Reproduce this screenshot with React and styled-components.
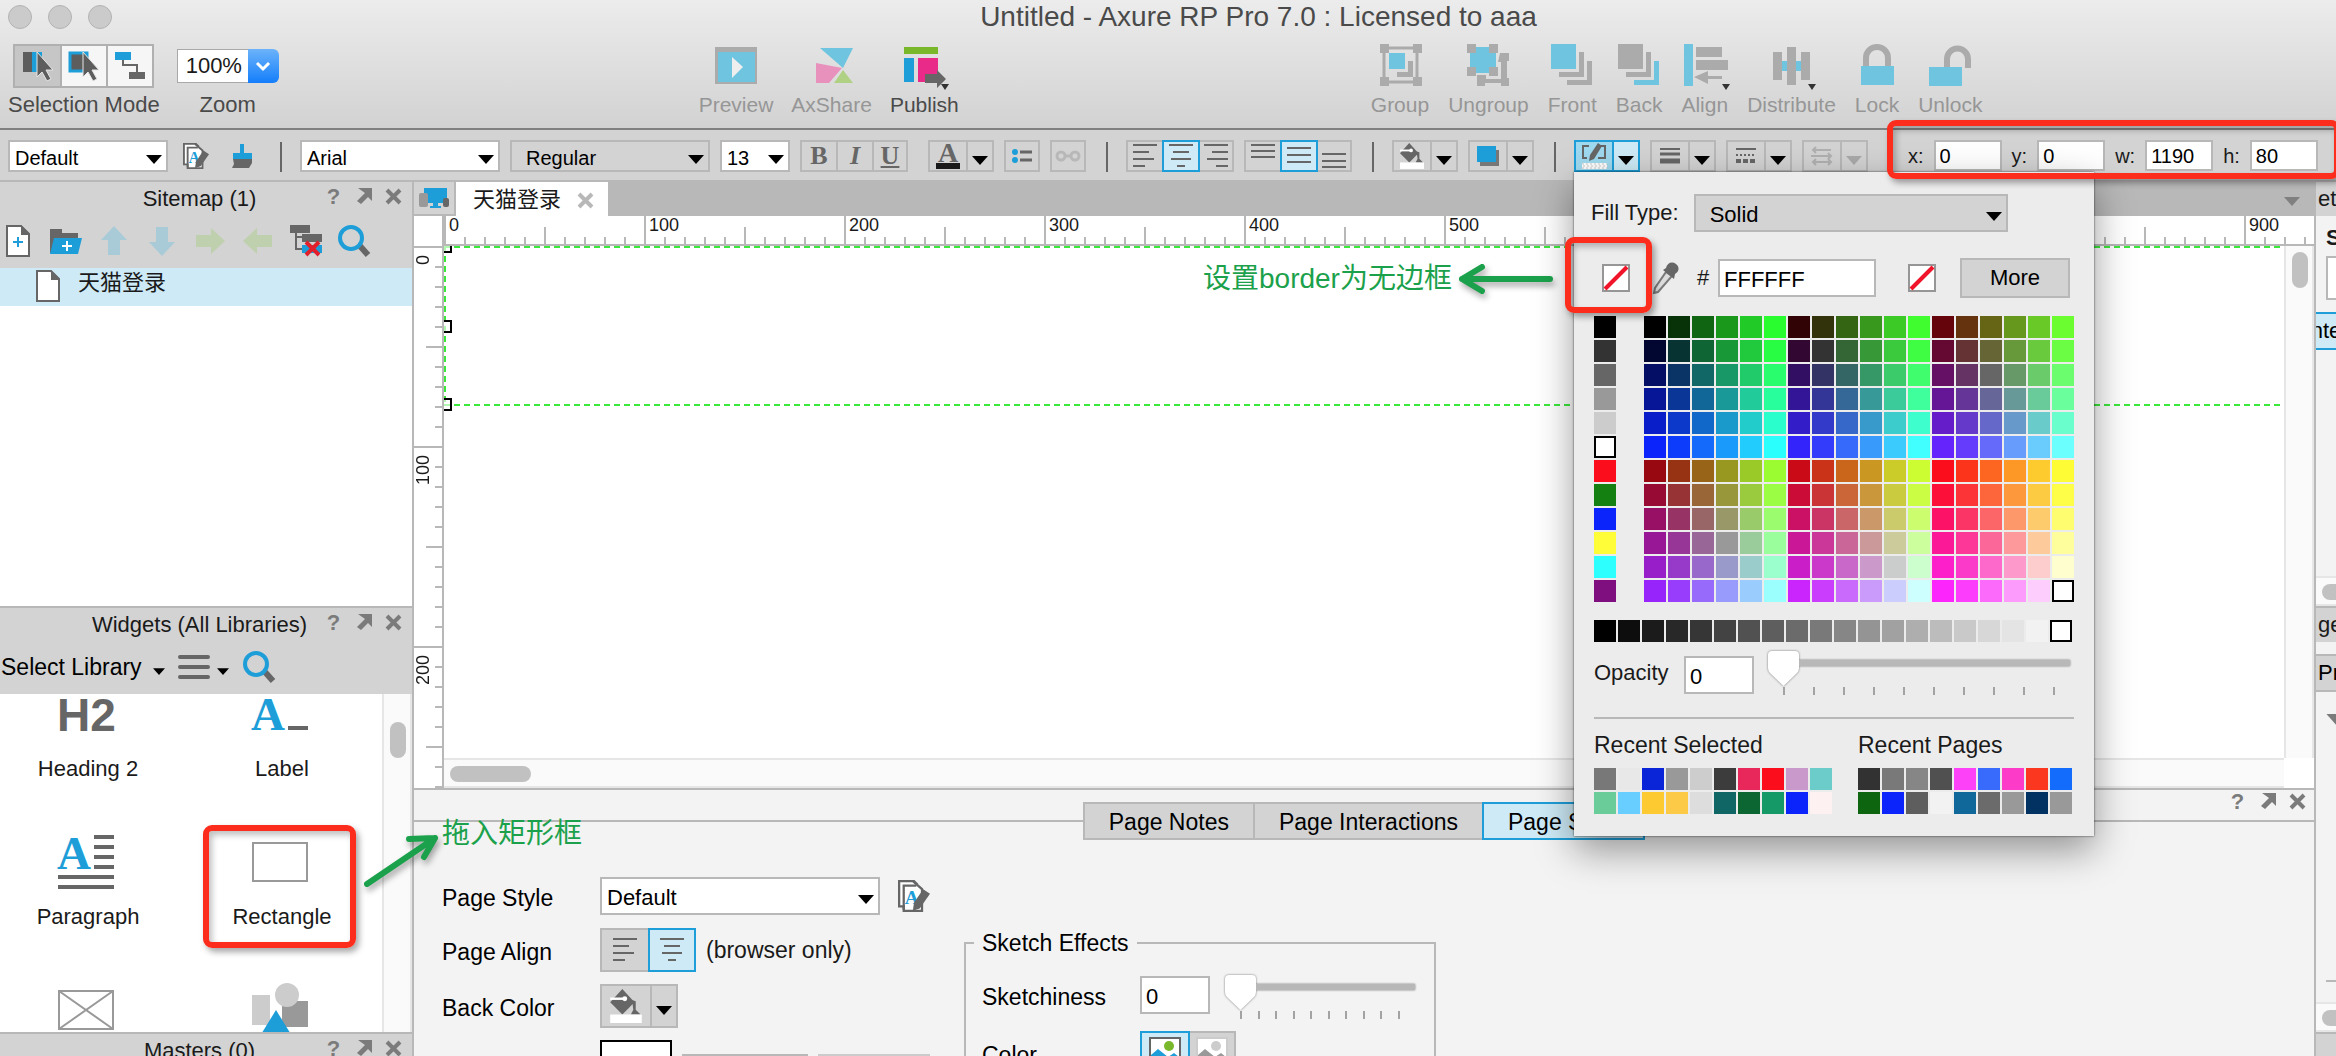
import React, { useState } from 'react';
import styled, { createGlobalStyle, css } from 'styled-components';

const SANS = '"Liberation Sans", "Noto Sans CJK SC", Arial, sans-serif';
const SERIF = '"Liberation Serif", "Noto Sans CJK SC", serif';
const LINE = '#b8b8b8';
const BAR = '#d3d3d3';
const INK = '#666666';
const BLUE = '#1d9ed8';
const PALE = '#cdeaf6';
const RED = '#fc2d1c';
const GREEN = '#1ba14b';

const GlobalStyle = createGlobalStyle`
  *, *::before, *::after { box-sizing: border-box; }
  body { margin: 0; font-family: ${SANS}; font-size: 22px; line-height: 24px; color: #1a1a1a; }
  button, input, select { font: inherit; color: inherit; margin: 0; padding: 0; border-radius: 0; }
  button { border: 0; background: none; cursor: pointer; }
  svg { display: block; overflow: visible; }
`;

/* ---------- frame ---------- */

const Window = styled.div`
  height: 100vh;
  overflow: hidden;
  display: flex;
  flex-direction: column;
  background: #f3f3f3;
`;

const Chrome = styled.header`
  height: 130px;
  flex: none;
  border-bottom: 2px solid #808080;
  background: linear-gradient(#ececec, #d2d2d2);
`;

const TitleRow = styled.div`
  display: flex;
  align-items: center;
  height: 34px;
`;

const Lights = styled.div`
  display: flex;
  gap: 16px;
  width: 181px;
  padding-left: 8px;
`;

const Light = styled.button`
  width: 24px;
  height: 24px;
  border: 1px solid #b3b3b3;
  border-radius: 50%;
  background: #cbcbcb;
`;

const Title = styled.h1`
  flex: 1;
  margin: 0;
  font-size: 28px;
  font-weight: 400;
  text-align: center;
  white-space: nowrap;
  color: #4a4a4a;
`;

const ToolRow = styled.div`
  display: flex;
  padding: 10px 0 0 8px;
`;

const ToolGroup = styled.div`
  display: flex;
  gap: ${(p) => p.$gap || 19}px;
  margin-left: ${(p) => p.$lead || 0}px;
`;

const Tool = styled.div`
  display: flex;
  flex-direction: column;
  align-items: center;
  gap: 5px;
  font-size: 22px;
  white-space: nowrap;
  color: ${(p) => (p.$dim ? '#969696' : '#4a4a4a')};
`;

const ToolButton = styled(Tool).attrs({ as: 'button', type: 'button' })`
  font-size: 21px;
`;

const IconSlot = styled.span`
  display: flex;
  align-items: center;
  justify-content: center;
  height: 44px;
`;

const Modes = styled.span`
  display: flex;
  border: 2px solid #b0b0b0;
`;

const Mode = styled.button`
  display: grid;
  place-items: center;
  width: 45px;
  height: 40px;
  background: ${(p) => (p.$on ? '#c6c6c6' : '#f6f6f6')};
  & + & { width: 46px; border-left: 2px solid #b0b0b0; }
`;

const ZoomInput = styled.input`
  width: 71px;
  height: 34px;
  padding-left: 8px;
  border: 1px solid #a9a9a9;
  border-right: 0;
  background: #fff;
  color: #1a1a1a;
`;

const ZoomDrop = styled.button`
  display: grid;
  place-items: center;
  width: 31px;
  height: 34px;
  border-radius: 0 6px 6px 0;
  background: linear-gradient(#6cb3fa, #147efb);
`;

/* ---------- format bar ---------- */

const FormatBar = styled.div`
  position: relative;
  z-index: 5;
  display: flex;
  align-items: flex-start;
  gap: 10px;
  flex: none;
  height: 52px;
  padding: 10px 0 0 8px;
  border-bottom: 2px solid ${LINE};
  background: ${BAR};
  font-size: 20px;
`;

const Rule = styled.span`
  width: 2px;
  height: 30px;
  margin: 2px 8px 0 10px;
  background: ${INK};
`;

const SelectBox = styled.span`
  display: grid;
  align-items: center;
  width: ${(p) => p.$w}px;
  height: ${(p) => p.$h || 32}px;
  border: 2px solid ${LINE};
  background: ${(p) => (p.$grey ? BAR : '#fff')};
  color: #000;
  & > * { grid-area: 1 / 1; }
  & > svg { justify-self: end; margin: 6px 4px 0 0; pointer-events: none; }
  select {
    appearance: none;
    width: 100%;
    height: 100%;
    padding: 4px 24px 0 ${(p) => p.$pad || 5}px;
    border: 0;
    background: none;
  }
`;

const Segments = styled.span`
  position: relative;
  display: flex;
  margin-left: ${(p) => p.$lead || 0}px;
  & > button + button { margin-left: -2px; }
`;

const Segment = styled.button`
  display: grid;
  place-items: center;
  position: relative;
  z-index: ${(p) => (p.$on ? 1 : 0)};
  width: ${(p) => p.$w || 36}px;
  height: ${(p) => p.$h || 32}px;
  border: 2px solid ${(p) => (p.$on ? BLUE : LINE)};
  background: ${(p) => (p.$on ? (p.$deep ? '#9fd9ef' : PALE) : BAR)};
`;

const PlainButton = styled.button`
  display: grid;
  place-items: center;
  width: 36px;
  height: 32px;
`;

const Glyph = styled.span`
  font: ${(p) => (p.$italic ? 'italic 700' : '700')} 26px/28px ${SERIF};
  color: ${INK};
  text-decoration: ${(p) => (p.$under ? 'underline' : 'none')};
`;

const Coords = styled.span`
  position: relative;
  display: flex;
  align-items: flex-start;
  gap: 10px;
  margin-left: 30px;
  label { display: flex; gap: 10px; line-height: 32px; }
  input {
    width: 68px;
    height: 31px;
    padding-left: 4px;
    border: 2px solid ${LINE};
    background: #fff;
    color: #000;
  }
`;

const RedFrame = styled.span`
  position: absolute;
  z-index: 4;
  left: ${(p) => p.$x}px;
  top: ${(p) => p.$y}px;
  width: ${(p) => p.$w}px;
  height: ${(p) => p.$h}px;
  border: 6px solid ${RED};
  border-radius: 9px;
  box-shadow: 3px 4px 6px rgba(0, 0, 0, 0.35), inset 3px 4px 6px rgba(0, 0, 0, 0.25);
  pointer-events: none;
`;

/* ---------- colour popup ---------- */

const Popup = styled.div`
  position: absolute;
  z-index: 3;
  top: 100%;
  left: 0;
  width: 520px;
  padding: 22px 20px;
  background: #ececec;
  box-shadow: 0 0 2px rgba(0, 0, 0, 0.7), 0 14px 36px rgba(0, 0, 0, 0.4);
  font-size: 22px;
  color: #1a1a1a;
`;

const FillRow = styled.label`
  display: flex;
  gap: 15px;
  align-items: center;
  height: 38px;
  margin-left: -3px;
`;

const HexRow = styled.div`
  display: grid;
  grid-template-columns: 45px 50px 21px 158px 1fr 110px;
  align-items: center;
  justify-items: start;
  height: 40px;
  margin: 26px 4px 18px 8px;
`;

const NoFill = styled.button`
  width: 28px;
  height: 28px;
  border: 2px solid #969696;
  background: #fff;
`;

const TextField = styled.input`
  width: ${(p) => p.$w}px;
  height: 38px;
  padding: 4px 0 0 4px;
  border: 2px solid ${LINE};
  background: #fff;
  && { color: #000; }
`;

const MoreButton = styled.button`
  width: 110px;
  height: 40px;
  border: 2px solid ${LINE};
  background: ${BAR};
  && { color: #000; }
`;

const Palettes = styled.div`
  display: flex;
  justify-content: space-between;
`;

const Swatches = styled.div`
  display: grid;
  grid-template-columns: repeat(${(p) => p.$cols}, 22px);
  gap: 2px;
  width: max-content;
`;

const Swatch = styled.button`
  width: 22px;
  height: 22px;
  background: ${(p) => p.$c};
  ${(p) => p.$picked && css`border: 2px solid #000;`}
`;

const GreyRow = styled.div`
  margin: 18px 0 9px;
`;

const OpacityRow = styled.div`
  display: flex;
  align-items: flex-start;
  height: 43px;
  label { width: 90px; padding-top: 10px; }
  > input { margin-top: 5px; }
`;

const Recents = styled.div`
  display: grid;
  grid-template-columns: 264px 1fr;
  margin-top: 23px;
  padding-top: 14px;
  border-top: 2px solid ${LINE};
`;

const RecentTitle = styled.h3`
  margin: 0 0 11px;
  font-size: 23px;
  font-weight: 400;
`;

/* ---------- slider ---------- */

const SliderBox = styled.span`
  display: block;
  width: ${(p) => p.$w}px;
  margin-left: ${(p) => p.$lead}px;
`;

const Range = styled.input.attrs({ type: 'range' })`
  appearance: none;
  display: block;
  width: 100%;
  height: 36px;
  background: linear-gradient(${LINE}, ${LINE}) 16px 9px / 100% 6px no-repeat;
  border-radius: 3px;
  filter: drop-shadow(0 0 1px rgba(0, 0, 0, 0.5));
  &::-webkit-slider-runnable-track { height: 36px; }
  &::-webkit-slider-thumb {
    appearance: none;
    width: 31px;
    height: 35px;
    background: #fff;
    clip-path: path('M4 0H27Q31 0 31 4V17Q31 20 29 22L15.500 35L2 22Q0 20 0 17V4Q0 0 4 0Z');
  }
`;

const Ticks = styled.span`
  display: flex;
  justify-content: space-between;
  padding: 0 15px;
  i { width: 2px; height: 8px; background: #a3a3a3; }
`;

/* ---------- workspace ---------- */

const Workspace = styled.main`
  flex: 1;
  min-height: 0;
  display: grid;
  grid-template-columns: 414px minmax(0, 1fr) 22px;
`;

const Column = styled.section`
  display: flex;
  flex-direction: column;
  min-width: 0;
  min-height: 0;
`;

const Side = styled(Column)`
  border-right: 2px solid ${LINE};
  background: #fff;
`;

const PanelHead = styled.div`
  display: flex;
  align-items: center;
  flex: none;
  height: ${(p) => (p.$line ? 34 : 32)}px;
  ${(p) => p.$line && css`border-top: 2px solid ${LINE};`}
  padding-left: 76px;
  background: ${BAR};
  h2 { flex: 1; margin: 0; padding-top: 2px; font-size: 22px; font-weight: 400; line-height: 32px; text-align: center; white-space: nowrap; }
`;

const HeadActions = styled.div`
  display: flex;
  gap: 9px;
  padding: 0 ${(p) => p.$end || 8}px 4px 0;
  button { display: grid; place-items: center; width: 21px; height: 22px; color: #7b7b7b; font-size: 22px; font-weight: 700; }
`;

const IconBar = styled.div`
  display: flex;
  align-items: center;
  gap: 12px;
  flex: none;
  height: 54px;
  background: ${BAR};
`;

const Tree = styled.ul`
  flex: 1;
  margin: 0;
  padding: 0;
  list-style: none;
`;

const TreeItem = styled.li`
  display: flex;
  gap: 18px;
  height: 38px;
  padding: 2px 0 0 36px;
  background: ${PALE};
  line-height: 26px;
`;

const WidgetsPanel = styled.div`
  display: flex;
  flex-direction: column;
  flex: none;
  height: 426px;
`;

const LibraryButton = styled.button`
  display: flex;
  align-items: center;
  gap: ${(p) => p.$gap}px;
  padding-left: 1px;
  && { color: #000; font-size: 23px; }
  svg:last-child { margin-top: 8px; }
`;

const WidgetArea = styled.div`
  position: relative;
  display: flex;
  flex: 1;
  min-height: 0;
`;

const WidgetClip = styled.div`
  flex: 1;
  overflow: hidden;
`;

const WidgetGrid = styled.div`
  display: grid;
  grid-template-columns: 172px 216px;
  grid-auto-rows: 148px;
`;

const Widget = styled.button`
  display: flex;
  flex-direction: column;
  align-items: center;
  justify-content: flex-start;
  svg { margin-bottom: 23px; }
  span { padding-left: 4px; }
`;

const ScrollY = styled.div`
  width: 30px;
  padding: ${(p) => p.$top}px 6px 0;
  border: solid #e6e6e6;
  border-width: 0 2px;
  background: #fafafa;
  &::before { content: ''; display: block; width: 16px; height: 36px; border-radius: 8px; background: #c1c1c1; }
`;

const ScrollX = styled.div`
  flex: none;
  height: 30px;
  padding: 6px 0 0 6px;
  border: solid #e6e6e6;
  border-width: 2px 0;
  background: #fafafa;
  overflow: hidden;
  &::before { content: ''; display: block; width: 81px; height: 16px; border-radius: 8px; background: #c1c1c1; }
`;

const Masters = styled.div`
  flex: none;
  height: 24px;
  overflow: hidden;
`;

/* ---------- canvas ---------- */

const TabStrip = styled.div`
  display: flex;
  flex: none;
  height: 34px;
  background: #b8b8b8;
`;

const PagesButton = styled.button`
  display: grid;
  place-items: center;
  width: 42px;
  height: 34px;
  border: solid ${LINE};
  border-width: 0 2px 2px 0;
  background: ${BAR};
`;

const DocTab = styled.div`
  display: flex;
  align-items: center;
  gap: 15px;
  width: 152px;
  padding: 2px 0 0 17px;
  background: #fff;
  white-space: nowrap;
  button { display: grid; place-items: center; width: 18px; height: 20px; }
`;

const TabMenu = styled.button`
  display: grid;
  place-items: center;
  width: 20px;
  margin: 4px 12px 0 auto;
`;

const Board = styled.div`
  position: relative;
  flex: 1;
  min-height: 0;
  display: grid;
  grid-template-columns: 30px minmax(0, 1fr) 30px;
  grid-template-rows: 30px minmax(0, 1fr) 30px;
  background: #fff;
  font-size: 18px;
`;

const Corner = styled.div`
  border-right: 2px solid ${LINE};
`;

const RulerX = styled.div`
  grid-column: 2 / 4;
  display: flex;
  overflow: hidden;
  border-bottom: 2px solid ${LINE};
`;

const MarkX = styled.span`
  flex: none;
  width: 200px;
  height: 28px;
  padding-left: 3px;
  border-left: 2px solid ${LINE};
  line-height: 18px;
  background:
    linear-gradient(${LINE}, ${LINE}) 98px 11px / 2px 17px no-repeat,
    repeating-linear-gradient(90deg, transparent 0 18px, ${LINE} 18px 20px) 0 21px / 190px 8px no-repeat;
`;

const RulerY = styled.div`
  grid-row: 2 / 4;
  overflow: hidden;
  border-right: 2px solid ${LINE};
`;

const MarkY = styled.span`
  display: flex;
  width: 28px;
  height: 200px;
  padding-top: 7px;
  border-top: 2px solid ${LINE};
  line-height: 18px;
  background:
    linear-gradient(${LINE}, ${LINE}) 12px 98px / 17px 2px no-repeat,
    repeating-linear-gradient(transparent 0 18px, ${LINE} 18px 20px) 21px 0 / 8px 190px no-repeat;
  b { writing-mode: vertical-rl; transform: rotate(180deg); font-weight: 400; height: max-content; }
`;

const Artboard = styled.div`
  position: relative;
  overflow: hidden;
`;

const Selection = styled.svg`
  width: 100%;
  height: 170px;
`;

const Note = styled.span`
  position: absolute;
  left: ${(p) => p.$x}px;
  top: ${(p) => p.$y}px;
  display: flex;
  align-items: center;
  gap: 4px;
  font-size: 28px;
  line-height: 32px;
  white-space: nowrap;
  color: ${GREEN};
`;

const Arrow = styled.svg`
  fill: none;
  stroke: ${GREEN};
  stroke-width: 6px;
  stroke-linecap: round;
  stroke-linejoin: round;
  filter: drop-shadow(2px 4px 3px rgba(0, 0, 0, 0.35));
`;

const FreeArrow = styled(Arrow)`
  position: absolute;
  left: -48px;
  top: 45px;
`;

/* ---------- page style panel ---------- */

const PagePanel = styled.div`
  position: relative;
  flex: none;
  height: 268px;
  border-top: 2px solid ${LINE};
  background: #f3f3f3;
  font-size: 23px;
  color: #000;
`;

const PageHead = styled.div`
  display: flex;
  justify-content: flex-end;
  height: 32px;
  border-bottom: 2px solid ${LINE};
`;

const Tabs = styled.div`
  display: flex;
  justify-content: center;
  margin-top: -20px;
`;

const Tab = styled.button`
  position: relative;
  height: 38px;
  padding: 2px 24px 0;
  border: 2px solid ${(p) => (p.$on ? BLUE : LINE)};
  background: ${(p) => (p.$on ? PALE : BAR)};
  & + & { margin-left: -2px; }
`;

const PageForm = styled.form`
  display: flex;
  align-items: flex-start;
  height: 216px;
  padding: 36px 0 0 28px;
  overflow: hidden;
`;

const Rows = styled.div`
  display: grid;
  gap: 12px;
  width: 522px;
`;

const Row = styled.div`
  display: flex;
  align-items: ${(p) => (p.$top ? 'flex-start' : 'center')};
  min-height: 40px;
  > label:first-child, > span:first-child { width: 158px; padding-top: 4px; }
  > ${SelectBox}, > input { font-size: 22px; }
  > ${SliderBox} { padding-top: 4px; }
`;

const Hint = styled.span`
  margin-left: 10px;
  color: #1a1a1a;
`;

const Thumb = styled.span`
  width: 72px;
  height: 44px;
  border: 2px solid #000;
  background: #fff;
`;

const LowButton = styled.button`
  width: ${(p) => p.$w}px;
  height: 40px;
  margin: 14px 0 0 10px;
  border: 2px solid ${(p) => (p.$dim ? '#cccccc' : LINE)};
  background: ${BAR};
`;

const PageStyleEdit = styled(PlainButton)`
  margin-left: 16px;
`;

const Sketch = styled.fieldset`
  width: 472px;
  height: 240px;
  margin: 55px 0 0;
  padding: 0 8px;
  border: 2px solid ${LINE};
  legend { padding: 0 8px; }
`;

const SketchRows = styled.div`
  display: grid;
  gap: 18px;
  padding: 20px 0 0 8px;
  ${Row} { height: 40px; }
`;

/* ---------- right edge ---------- */

const Edge = styled(Column)`
  border-left: 2px solid ${LINE};
  overflow: hidden;
  background: #f3f3f3;
`;

const EdgeHead = styled.div`
  flex: none;
  height: ${(p) => p.$h}px;
  padding-left: 2px;
  border-top: ${(p) => (p.$line ? 2 : 0)}px solid ${LINE};
  background: ${BAR};
  line-height: 34px;
`;

const EdgePart = styled.div`
  display: flex;
  flex-direction: column;
  ${(p) => (p.$h ? css`flex: none; height: ${p.$h}px;` : css`flex: 1;`)}
`;

const EdgeTitle = styled.b`
  margin: 10px 0 6px 10px;
`;

const EdgeField = styled.input`
  width: 120px;
  height: 44px;
  margin-left: 10px;
  border: 2px solid ${LINE};
  background: #fff;
`;

const EdgeTab = styled.button`
  display: flex;
  align-items: center;
  justify-content: ${(p) => (p.$on ? 'center' : 'flex-start')};
  height: 38px;
  margin-top: 12px;
  padding-left: ${(p) => (p.$on ? 0 : 2)}px;
  border: solid ${(p) => (p.$on ? BLUE : LINE)};
  border-width: 2px 0;
  background: ${(p) => (p.$on ? PALE : BAR)};
  && { color: #000; }
`;

const EdgeLine = styled.hr`
  width: 100px;
  margin: auto 0 20px 10px;
  border: 0;
  border-top: 2px solid ${LINE};
`;

const Spacer = styled.div`
  flex: 1;
`;

const Disclosure = styled.span`
  display: block;
  width: 20px;
  margin: 22px 0 0 10px;
`;

const SplitCaret = styled.span`
  padding-top: 8px;
`;

const ClearCell = styled.span`
  height: 28px;
  padding-left: 32px;
`;

/* ---------- drawings ---------- */

const Caret = ({ w = 16, c = '#000' }) => (
  <svg width={w} height={w / 2 + 1} viewBox="0 0 16 9" fill={c}><path d="M0 0h16L8 9z" /></svg>
);

const SmallCaret = () => <path d="M39 40h8l-4 6z" fill="#333" />;

const G = '#ababab';
const C = '#6fc4e0';

const toolDrawings = {
  Preview: <><path d="M1 3h42v37H1z" fill={G} /><path d="M4 8h37v30H4z" fill={C} /><path d="M18 13l11 10-11 11z" fill="#eee" /></>,
  AxShare: <><path d="M10 4h33L33 24z" fill={C} /><path d="M6 19l26 5-13 15H6z" fill="#e891bd" /><path d="M33 26l10 13H24z" fill="#b0d083" /></>,
  Publish: <><path d="M2 3h34v7H2z" fill="#78b82a" /><path d="M2 14h10v24H2z" fill={BLUE} /><path d="M16 14h20v24H16z" fill="#e92a89" /><path d="M23 30h12v-4l9 9-9 9v-5H23z" fill={INK} /><SmallCaret /></>,
  Group: <><path d="M6 4h33v34H6z" fill="none" stroke={G} strokeWidth="3" /><path d="M2 0h9v9H2zM35 0h9v9h-9zM2 33h9v9H2zM35 33h9v9h-9z" fill={G} /><path d="M11 9h16v16H11z" fill={C} /><path d="M19 28h11V17h5v16H19z" fill={G} /></>,
  Ungroup: <><path d="M4 3h26v26H4z" fill={C} /><path d="M1 0h9v9H1zM23 0h9v9h-9zM1 23h9v9H1zM23 23h9v9h-9zM34 9h9v8h-2v17h2v8h-8v-3H19v3h-8V31h9v4h15V18h-3z" fill={G} /></>,
  Front: <><path d="M1 0h25v25H1z" fill={C} /><path d="M9 28h20V8h5v25H9zM17 36h20V17h5v24H17z" fill={G} /></>,
  Back: <><path d="M1 0h25v25H1zM9 28h20V8h5v25H9z" fill={G} /><path d="M17 36h20V17h5v24H17z" fill={C} /></>,
  Align: <><path d="M1 0h9v42H1z" fill={C} /><path d="M13 3h26v10H13zM13 16h32v10H13zM11 33l14-6v5h14v3H25v5z" fill={G} /><SmallCaret /></>,
  Distribute: <><path d="M13 17h20v10H13z" fill={C} /><path d="M4 8h9v28H4zM18 3h9v38h-9zM32 8h9v28h-9z" fill={G} /><SmallCaret /></>,
  Lock: <><path d="M11 23V14a11 11 0 0 1 22 0v9" fill="none" stroke={G} strokeWidth="6" /><path d="M6 22h33v19H6z" fill={C} /></>,
  Unlock: <><path d="M19 23V15a10 10 0 0 1 21 0v9" fill="none" stroke={G} strokeWidth="6" /><path d="M1 23h33v19H1z" fill={C} /></>,
};

const Pointer = () => <path d="M14 4v25l5-5 5 9 4-2-5-9h7z" fill="#5d5d5d" stroke="#e6e6e6" strokeWidth="1" />;

const AlignLines = ({ kind, big }) => {
  const d = {
    left: 'M0 1h24M0 8h16M0 15h21M0 22h12',
    center: 'M0 1h24M4 8h16M2 15h20M8 22h8',
    right: 'M0 1h24M8 8h16M3 15h21M12 22h12',
    top: 'M0 1h24M0 7h24M0 13h24',
    middle: 'M0 4h24M0 11h24M0 18h24',
    bottom: 'M0 10h24M0 17h24M0 23h24',
  }[kind];
  return <svg width={big ? 26 : 24} height="24" viewBox="0 0 24 24" stroke={INK} strokeWidth="2"><path d={d} /></svg>;
};

const PageIcon = ({ plus }) => (
  <svg width="24" height="32" viewBox="0 0 24 32">
    <path d="M1 1h14l8 8v22H1z" fill="#fff" stroke={INK} strokeWidth="2" />
    <path d="M15 0l9 9v1h-9z" fill={INK} />
    {plus && <path d="M12 12v10M7 17h10" stroke={BLUE} strokeWidth="2" />}
  </svg>
);

const BigArrow = ({ turn, c }) => (
  <svg width="30" height="30" viewBox="0 0 30 30" fill={c}><path transform={`rotate(${turn} 15 15)`} d="M15 0l13 14h-7v15H9V14H2z" /></svg>
);

const Lens = () => (
  <svg width="32" height="32" viewBox="0 0 32 32" fill="none">
    <path d="M22 21l8 9" stroke={INK} strokeWidth="6" />
    <circle cx="13" cy="13" r="11" stroke={BLUE} strokeWidth="4" />
  </svg>
);

const StylesIcon = ({ s = 26 }) => (
  <svg width={s} height={s} viewBox="0 0 28 28">
    <path d="M1 22V1h13l3 3" fill="#fff" stroke={INK} strokeWidth="2" />
    <path d="M1 1h12l8 7v19H5v-4H1z" fill="#fff" stroke={INK} strokeWidth="2" />
    <path d="M5 26V5h11" fill="none" stroke={INK} strokeWidth="2" />
    <text x="6" y="21" fontFamily="Liberation Serif, serif" fontWeight="700" fontSize="17" fill={BLUE}>A</text>
    <path d="M22 8l6 4-9 13-6 2 1-7z" fill={INK} />
  </svg>
);

const Bucket = ({ s = 26 }) => (
  <svg width={s} height={s + 2} viewBox="0 0 26 28">
    <path d="M10 0l10 11-10 10L0 11z" fill={INK} />
    <path d="M0 8h12" stroke="#fff" strokeWidth="2" /><circle cx="12" cy="8" r="2" fill="#fff" />
    <path d="M18 9l3 1v7l4 4h-8l2-4z" fill={INK} />
    <path d="M0 21h26v7H0z" fill="#fff" />
  </svg>
);

const BorderIcon = () => (
  <svg width="26" height="28" viewBox="0 0 26 28">
    <path d="M8 4H2v12h4M18 4h6v12h-7" fill="none" stroke={INK} strokeWidth="2" />
    <path d="M17 1l4 3-8 13-5 2 1-6z" fill={INK} />
    <path d="M1 21h25v6H1z" fill="#fff" />
    <path d="M1 22h25M2 24h25M1 26h25" stroke="#c9c9c9" strokeDasharray="2 2" />
  </svg>
);

const Picture = ({ grey }) => (
  <svg width="32" height="32" viewBox="0 0 32 32">
    <path d="M1 1h30v30H1z" fill="#fff" stroke={grey ? '#ccc' : INK} strokeWidth="2" />
    <circle cx="20" cy="9" r="5" fill={grey ? '#ccc' : '#78b82a'} />
    <path d="M2 18l7-6 10 8 6-4 5 4v10H2z" fill={grey ? '#999' : BLUE} />
  </svg>
);

const Slash = () => <svg width="24" height="24" viewBox="0 0 24 24"><path d="M1 23L23 1" stroke="#f0152a" strokeWidth="4" /></svg>;

const Popout = () => <svg width="16" height="16" viewBox="0 0 16 16" fill="#7b7b7b"><path d="M2 0h14v13l-4-4-7 7-4-3 8-8z" /></svg>;

const Cross = ({ c = '#7b7b7b' }) => <svg width="15" height="15" viewBox="0 0 15 15" stroke={c} strokeWidth="4"><path d="M1 1l13 13M14 1L1 14" /></svg>;

/* ---------- colours ---------- */

const PRIMARIES = [[252, 13, 27], [41, 253, 47], [11, 36, 251]];
const linear = (v) => Math.pow(v / 255, 2.2);

function displayColor(rgb) {
  const out = [0, 1, 2].map((ch) => {
    const sum = rgb.reduce((acc, v, i) => acc + linear(v) * linear(PRIMARIES[i][ch]), 0);
    return Math.min(255, Math.round(255 * Math.pow(sum, 1 / 2.2)));
  });
  return `rgb(${out.join(', ')})`;
}

const CUBE = Array.from({ length: 216 }, (_, i) => {
  const row = Math.floor(i / 18);
  const col = i % 18;
  if (i === 215) return '#fff';
  return displayColor([(row < 6 ? 0 : 153) + Math.floor(col / 6) * 51, (col % 6) * 51, (row % 6) * 51]);
});

const BASICS = ['#000', '#333', '#666', '#999', '#ccc', '#fff', '#fc0d1b', '#138011', '#0b24fb', '#fffd38', '#2dfffe', '#7f0f7e'];
const GREYS = Array.from({ length: 20 }, (_, i) => { const v = Math.round((i * 255) / 19); return `rgb(${v}, ${v}, ${v})`; });
const RECENT = ['#787878', '#e8e8e8', '#0a24d8', '#999', '#cdcdcd', '#3c3c3c', '#e8275a', '#fc0d1b', '#ca99cb', '#6bccca',
  '#69cc99', '#68cdff', '#fdca32', '#fdca48', '#dddddd', '#0f6664', '#0c6631', '#159967', '#0b24fb', '#fdf1f1'];
const PAGES = ['#323232', '#797979', '#868686', '#505050', '#fd41f9', '#386bfc', '#fc3bc8', '#fb371f', '#136cfb',
  '#0d660f', '#0b24fb', '#5e5e5e', '#f2f2f2', '#0f6899', '#6b6b6b', '#999', '#013262', '#999'];

const SwatchGrid = ({ name, cols, colors, picked }) => (
  <Swatches $cols={cols} role="group" aria-label={name}>
    {colors.map((c, i) => <Swatch key={i} type="button" aria-label={`${name} ${i + 1}`} $c={c} $picked={i === picked} />)}
  </Swatches>
);

/* ---------- parts ---------- */

const Slider = ({ label, w, lead, value, onChange }) => (
  <SliderBox $w={w} $lead={lead}>
    <Range aria-label={label} min="0" max="100" value={value} onChange={onChange} />
    <Ticks>{Array.from({ length: 10 }, (_, i) => <i key={i} />)}</Ticks>
  </SliderBox>
);

const Picker = ({ label, value, w, h, grey, pad }) => (
  <SelectBox $w={w} $h={h} $grey={grey} $pad={pad}>
    <select aria-label={label} defaultValue={value}><option>{value}</option></select>
    <Caret />
  </SelectBox>
);

const Split = ({ label, icon, on, dim, lead, children }) => (
  <Segments $lead={lead}>
    <Segment type="button" aria-label={label} $w={40} $on={on} $deep>{icon}</Segment>
    <Segment type="button" aria-label={`${label} options`} $w={28} $on={on}><SplitCaret><Caret c={dim ? '#a9a9a9' : '#000'} /></SplitCaret></Segment>
    {children}
  </Segments>
);

const ToolItem = ({ name, dim }) => (
  <ToolButton $dim={dim}>
    <IconSlot><svg width="44" height="44" viewBox="0 0 44 44">{toolDrawings[name]}</svg></IconSlot>
    {name}
  </ToolButton>
);

const Actions = ({ end }) => (
  <HeadActions $end={end}>
    <button type="button" aria-label="Help">?</button>
    <button type="button" aria-label="Pop out"><Popout /></button>
    <button type="button" aria-label="Close"><Cross /></button>
  </HeadActions>
);

function ColorPopup() {
  const [opacity, setOpacity] = useState(0);
  const update = (e) => setOpacity(Number(e.target.value) || 0);
  return (
    <Popup role="dialog" aria-label="Line color">
      <FillRow>Fill Type:<Picker label="Fill Type" value="Solid" w={314} h={38} grey pad={14} /></FillRow>
      <HexRow>
        <NoFill type="button" aria-label="No line"><Slash /></NoFill>
        <PlainButton type="button" aria-label="Pick from screen">
          <svg width="26" height="32" viewBox="0 0 26 32">
            <path d="M14 10l6 4L6 30l-4 1 1-5z" fill="#dcdcdc" stroke="#7a7a7a" strokeWidth="2" />
            <path d="M11 8l3-2c1-5 6-7 10-4s3 8-1 10l-1 5z" fill={INK} />
          </svg>
        </PlainButton>
        <label htmlFor="hex">#</label>
        <TextField id="hex" $w={158} defaultValue="FFFFFF" />
        <ClearCell><NoFill type="button" aria-label="Clear color"><Slash /></NoFill></ClearCell>
        <MoreButton type="button">More</MoreButton>
      </HexRow>
      <Palettes>
        <SwatchGrid name="Basic color" cols={1} colors={BASICS} picked={5} />
        <SwatchGrid name="Color" cols={18} colors={CUBE} picked={215} />
      </Palettes>
      <GreyRow><SwatchGrid name="Grey" cols={20} colors={GREYS} picked={19} /></GreyRow>
      <OpacityRow>
        <label htmlFor="opacity">Opacity</label>
        <TextField id="opacity" $w={70} value={opacity} onChange={update} />
        <Slider label="Opacity" w={302} lead={14} value={opacity} onChange={update} />
      </OpacityRow>
      <Recents>
        <div><RecentTitle>Recent Selected</RecentTitle><SwatchGrid name="Recent" cols={10} colors={RECENT} /></div>
        <div><RecentTitle>Recent Pages</RecentTitle><SwatchGrid name="Page" cols={9} colors={PAGES} /></div>
      </Recents>
      <RedFrame $x={-9} $y={65} $w={87} $h={76} />
    </Popup>
  );
}

function TopBar() {
  return (
    <Chrome>
      <TitleRow>
        <Lights>
          <Light type="button" aria-label="Close window" />
          <Light type="button" aria-label="Minimize window" />
          <Light type="button" aria-label="Zoom window" />
        </Lights>
        <Title>Untitled - Axure RP Pro 7.0 : Licensed to aaa</Title>
      </TitleRow>
      <ToolRow>
        <ToolGroup $gap={17}>
          <Tool>
            <IconSlot>
              <Modes>
                <Mode type="button" aria-label="Select intersected" $on>
                  <svg width="30" height="36" viewBox="0 0 30 36"><path d="M0 4h14v20H0z" fill="#5d5d5d" /><path d="M9 4h10v20H9z" fill={BLUE} /><Pointer /></svg>
                </Mode>
                <Mode type="button" aria-label="Select contained">
                  <svg width="30" height="36" viewBox="0 0 30 36"><path d="M1 5h17v18H1z" fill="#5d5d5d" stroke={BLUE} strokeWidth="3" /><Pointer /></svg>
                </Mode>
                <Mode type="button" aria-label="Connector">
                  <svg width="30" height="28" viewBox="0 0 30 28"><path d="M8 7v6h14v7" fill="none" stroke={INK} strokeWidth="2" /><path d="M0 0h16v8H0z" fill={BLUE} /><path d="M14 20h16v7H14z" fill={INK} /></svg>
                </Mode>
              </Modes>
            </IconSlot>
            Selection Mode
          </Tool>
          <Tool>
            <IconSlot>
              <ZoomInput id="zoom" defaultValue="100%" />
              <ZoomDrop type="button" aria-label="Zoom levels"><svg width="14" height="9" viewBox="0 0 14 9" fill="none" stroke="#fff" strokeWidth="3"><path d="M1 1l6 6 6-6" /></svg></ZoomDrop>
            </IconSlot>
            <label htmlFor="zoom">Zoom</label>
          </Tool>
        </ToolGroup>
        <ToolGroup $lead={420} $gap={18}><ToolItem name="Preview" dim /><ToolItem name="AxShare" dim /><ToolItem name="Publish" /></ToolGroup>
        <ToolGroup $lead={412}>
          {['Group', 'Ungroup', 'Front', 'Back', 'Align', 'Distribute', 'Lock', 'Unlock'].map((n) => <ToolItem key={n} name={n} dim />)}
        </ToolGroup>
      </ToolRow>
    </Chrome>
  );
}

function Formatting() {
  return (
    <FormatBar>
      <Picker label="Style" value="Default" w={160} />
      <PlainButton type="button" aria-label="Edit styles"><StylesIcon /></PlainButton>
      <PlainButton type="button" aria-label="Format painter">
        <svg width="20" height="24" viewBox="0 0 20 24"><path d="M8 0h4v9h8v6H1V9h7z" fill={BLUE} /><path d="M1 15h19v4l-3 5H0l2-4z" fill={INK} /></svg>
      </PlainButton>
      <Rule />
      <Picker label="Font" value="Arial" w={200} />
      <Picker label="Typeface" value="Regular" w={200} grey pad={14} />
      <Picker label="Font size" value="13" w={70} />
      <Segments>
        <Segment type="button" aria-label="Bold" $w={38}><Glyph>B</Glyph></Segment>
        <Segment type="button" aria-label="Italic" $w={38}><Glyph $italic>I</Glyph></Segment>
        <Segment type="button" aria-label="Underline"><Glyph $under>U</Glyph></Segment>
      </Segments>
      <Split
        label="Text color"
        lead={10}
        icon={<svg width="24" height="28" viewBox="0 0 24 28"><text x="2" y="20" fontFamily="Liberation Serif, serif" fontWeight="700" fontSize="28" fill={INK}>A</text><path d="M0 21h24v6H0z" fill="#1a1a1a" /></svg>}
      />
      <Segment type="button" aria-label="Bullets">
        <svg width="22" height="16" viewBox="0 0 22 16"><circle cx="4" cy="4" r="3" fill={BLUE} /><circle cx="4" cy="12" r="3" fill={BLUE} /><path d="M9 4h12M9 12h12" stroke={INK} strokeWidth="3" /></svg>
      </Segment>
      <Segment type="button" aria-label="Link">
        <svg width="26" height="12" viewBox="0 0 26 12" fill="none" stroke={LINE} strokeWidth="3"><circle cx="6" cy="6" r="4" /><circle cx="20" cy="6" r="4" /><path d="M9 6h8" /></svg>
      </Segment>
      <Rule />
      <Segments>
        {['left', 'center', 'right'].map((k, i) => <Segment key={k} type="button" aria-label={`Align ${k}`} $on={i === 1} $w={i === 2 ? 36 : 38}><AlignLines kind={k} /></Segment>)}
      </Segments>
      <Segments>
        {['top', 'middle', 'bottom'].map((k, i) => <Segment key={k} type="button" aria-label={`Align ${k}`} $on={i === 1} $w={i === 2 ? 36 : 38}><AlignLines kind={k} /></Segment>)}
      </Segments>
      <Rule />
      <Split label="Fill color" icon={<Bucket s={24} />} />
      <Split label="Shadow" icon={<svg width="22" height="20" viewBox="0 0 22 20"><path d="M3 4h19v16H3z" fill="#777" /><path d="M0 0h19v16H0z" fill={BLUE} /></svg>} />
      <Rule />
      <Split label="Line color" on icon={<BorderIcon />}><ColorPopup /></Split>
      <Split label="Line width" icon={<svg width="20" height="16" viewBox="0 0 20 16" stroke={INK}><path d="M0 1h20" strokeWidth="2" /><path d="M0 6h20" strokeWidth="3" /><path d="M0 13h20" strokeWidth="5" /></svg>} />
      <Split label="Line pattern" icon={<svg width="20" height="16" viewBox="0 0 20 16" stroke={INK}><path d="M0 1h20" strokeWidth="2" /><path d="M0 7h20" strokeWidth="2" strokeDasharray="2 2" /><path d="M0 13h20" strokeWidth="4" strokeDasharray="5 2" /></svg>} />
      <Split label="Arrow style" dim icon={<svg width="22" height="18" viewBox="0 0 22 18" stroke="#b0b0b0" strokeWidth="2" fill="none"><path d="M2 3h18M5 0L2 3l3 3M0 9h20M17 6l3 3-3 3M2 15h18M5 12l-3 3 3 3M17 12l3 3-3 3" /></svg>} />
      <Coords>
        <label>x: <input defaultValue="0" /></label>
        <label>y: <input defaultValue="0" /></label>
        <label>w: <input defaultValue="1190" /></label>
        <label>h: <input defaultValue="80" /></label>
        <RedFrame $x={-21} $y={-20} $w={453} $h={59} />
      </Coords>
    </FormatBar>
  );
}

const WIDGETS = [
  ['Heading 2', <><text x="-1" y="37" fontFamily="Liberation Sans, sans-serif" fontWeight="700" fontSize="46" fill={INK}>H2</text></>],
  ['Label', <><text x="-1" y="36" fontFamily="Liberation Serif, serif" fontWeight="700" fontSize="47" fill={BLUE}>A</text><path d="M36 32h20v4H36z" fill={INK} /></>],
  ['Paragraph', <><text x="-1" y="27" fontFamily="Liberation Serif, serif" fontWeight="700" fontSize="47" fill={BLUE}>A</text><path d="M36-5h20M36 5h20M36 15h20M36 25h20M0 35h56M0 45h56" stroke={INK} strokeWidth="4" /></>],
  ['Rectangle', <path d="M1 1h54v38H1z" fill="#fff" stroke="#999" strokeWidth="2" />],
  ['Placeholder', <path d="M1 1h54v38H1zL55 39M55 1L1 39" fill="#fff" stroke="#999" strokeWidth="2" />],
  ['Shape', <><path d="M0 5h18v30H0z" fill="#ccc" /><path d="M30 11h26v26H30z" fill="#999" /><circle cx="35" cy="5" r="12" fill="#ccc" /><path d="M24 20l16 26H8z" fill={BLUE} /></>],
];

function LeftSide() {
  return (
    <Side>
      <PanelHead><h2>Sitemap (1)</h2><Actions /></PanelHead>
      <IconBar>
        <PlainButton type="button" aria-label="Add page"><PageIcon plus /></PlainButton>
        <PlainButton type="button" aria-label="Add folder">
          <svg width="32" height="25" viewBox="0 0 32 25"><path d="M0 0h12v4h16v6H0z" fill={INK} /><path d="M0 4h5v20H0z" fill={INK} /><path d="M4 9h28l-4 16H0z" fill={BLUE} /><path d="M17 12v10M12 17h10" stroke="#fff" strokeWidth="2" /></svg>
        </PlainButton>
        <PlainButton type="button" aria-label="Move up"><BigArrow turn={0} c="#a9cbd8" /></PlainButton>
        <PlainButton type="button" aria-label="Move down"><BigArrow turn={180} c="#a9cbd8" /></PlainButton>
        <PlainButton type="button" aria-label="Indent"><BigArrow turn={90} c="#bfd0ae" /></PlainButton>
        <PlainButton type="button" aria-label="Outdent"><BigArrow turn={270} c="#bfd0ae" /></PlainButton>
        <PlainButton type="button" aria-label="Delete page">
          <svg width="32" height="32" viewBox="0 0 32 32"><path d="M6 8v16h8M6 12h8" fill="none" stroke={INK} strokeWidth="2" /><path d="M0 0h20v8H0zM12 9h20v8H12z" fill={INK} /><path d="M12 20h20v8H12z" fill={BLUE} /><path d="M16 17l13 13M29 17L16 30" stroke="#e2202c" strokeWidth="4" /></svg>
        </PlainButton>
        <PlainButton type="button" aria-label="Search pages"><Lens /></PlainButton>
      </IconBar>
      <Tree><TreeItem><PageIcon />天猫登录</TreeItem></Tree>
      <WidgetsPanel>
        <PanelHead $line><h2>Widgets (All Libraries)</h2><Actions /></PanelHead>
        <IconBar>
          <LibraryButton type="button" $gap={11}>Select Library<Caret w={12} /></LibraryButton>
          <LibraryButton type="button" aria-label="Library menu" $gap={7}>
            <svg width="32" height="24" viewBox="0 0 32 24" stroke={INK} strokeWidth="4" strokeLinecap="round"><path d="M2 2h28M2 12h28M2 22h28" /></svg>
            <Caret w={12} />
          </LibraryButton>
          <PlainButton type="button" aria-label="Search widgets"><Lens /></PlainButton>
        </IconBar>
        <WidgetArea>
          <WidgetClip>
            <WidgetGrid>
              {WIDGETS.map(([name, art]) => (
                <Widget key={name} type="button">
                  <svg width="56" height="40" viewBox="0 0 56 40">{art}</svg>
                  <span>{name}</span>
                </Widget>
              ))}
            </WidgetGrid>
          </WidgetClip>
          <ScrollY $top={28} />
          <RedFrame $x={203} $y={131} $w={153} $h={123} />
        </WidgetArea>
      </WidgetsPanel>
      <Masters><PanelHead $line><h2>Masters (0)</h2><Actions /></PanelHead></Masters>
    </Side>
  );
}

function Center() {
  const [sketch, setSketch] = useState(0);
  const update = (e) => setSketch(Number(e.target.value) || 0);
  return (
    <Column>
      <TabStrip>
        <PagesButton type="button" aria-label="Pages">
          <svg width="30" height="20" viewBox="0 0 30 20"><path d="M5 0h23v15H19v3h3v2H11v-2h3v-3H5z" fill={BLUE} /><rect x="0" y="5" width="9" height="14" rx="2" fill="#999" /><rect x="24" y="10" width="6" height="9" rx="2" fill={INK} /></svg>
        </PagesButton>
        <DocTab>天猫登录<button type="button" aria-label="Close tab"><Cross c="#b8b8b8" /></button></DocTab>
        <TabMenu type="button" aria-label="All tabs"><Caret w={16} c="#808080" /></TabMenu>
      </TabStrip>
      <Board>
        <Corner />
        <RulerX>{Array.from({ length: 14 }, (_, i) => <MarkX key={i}>{i * 100}</MarkX>)}</RulerX>
        <RulerY>{[0, 100, 200].map((n) => <MarkY key={n}><b>{n}</b></MarkY>)}</RulerY>
        <Artboard>
          <Selection>
            <g stroke="#3de83d" strokeWidth="2" strokeDasharray="6 4"><path d="M0 1h1836M0 159h1836M1 0v159" /></g>
            <g fill="#fff" fillOpacity="0.6" stroke="#000" strokeWidth="2"><path d="M-4-4h11v10H-4zM-4 75h11v11H-4zM-4 153h11v11H-4z" /></g>
          </Selection>
          <Note $x={759} $y={17}>
            设置border为无边框
            <Arrow width="97" height="30" viewBox="0 0 97 30"><path d="M94 15H6M26 3L6 15l20 12" /></Arrow>
          </Note>
        </Artboard>
        <ScrollY $top={6} />
        <ScrollX />
      </Board>
      <PagePanel>
        <PageHead><Actions end={6} /></PageHead>
        <Tabs role="tablist">
          <Tab type="button" role="tab">Page Notes</Tab>
          <Tab type="button" role="tab">Page Interactions</Tab>
          <Tab type="button" role="tab" $on>Page Style</Tab>
        </Tabs>
        <PageForm>
          <Rows>
            <Row><span>Page Style</span><Picker label="Page Style" value="Default" w={280} h={38} /><PageStyleEdit type="button" aria-label="Edit page styles"><StylesIcon s={32} /></PageStyleEdit></Row>
            <Row>
              <span>Page Align</span>
              <Segments>
                <Segment type="button" aria-label="Left" $w={50} $h={44}><AlignLines kind="left" big /></Segment>
                <Segment type="button" aria-label="Center" $w={48} $h={44} $on><AlignLines kind="center" big /></Segment>
              </Segments>
              <Hint>(browser only)</Hint>
            </Row>
            <Row>
              <span>Back Color</span>
              <Segments>
                <Segment type="button" aria-label="Back color" $w={52} $h={44}><Bucket s={32} /></Segment>
                <Segment type="button" aria-label="Back color options" $w={28} $h={44}><SplitCaret><Caret /></SplitCaret></Segment>
              </Segments>
            </Row>
            <Row $top><span /><Thumb /><LowButton type="button" aria-label="Import image" $w={126} /><LowButton type="button" aria-label="Clear image" $w={112} $dim /></Row>
          </Rows>
          <Sketch>
            <legend>Sketch Effects</legend>
            <SketchRows>
              <Row>
                <label htmlFor="sketch">Sketchiness</label>
                <TextField id="sketch" $w={70} value={sketch} onChange={update} />
                <Slider label="Sketchiness" w={190} lead={15} value={sketch} onChange={update} />
              </Row>
              <Row>
                <span>Color</span>
                <Segments>
                  <Segment type="button" aria-label="Color" $w={50} $h={44} $on><Picture /></Segment>
                  <Segment type="button" aria-label="Greyscale" $w={48} $h={44}><Picture grey /></Segment>
                </Segments>
              </Row>
            </SketchRows>
          </Sketch>
        </PageForm>
        <Note $x={28} $y={28}>拖入矩形框</Note>
        <FreeArrow width="74" height="54" viewBox="0 0 74 54"><path d="M1 49L69 3M43 4l26-1-11 19" /></FreeArrow>
      </PagePanel>
    </Column>
  );
}

function RightEdge() {
  return (
    <Edge>
      <EdgeHead $h={34}>et</EdgeHead>
      <EdgePart>
        <EdgeTitle>S</EdgeTitle>
        <EdgeField aria-label="Widget name" />
        <EdgeTab type="button" $on>nte</EdgeTab>
        <Spacer />
        <ScrollX />
      </EdgePart>
      <EdgePart $h={426}>
        <EdgeHead $h={36} $line>ge</EdgeHead>
        <EdgeTab type="button">Pr</EdgeTab>
        <Disclosure><Caret w={24} c="#7b7b7b" /></Disclosure>
        <EdgeLine />
        <ScrollX />
      </EdgePart>
      <EdgeHead $h={24} $line />
    </Edge>
  );
}

export default function App() {
  return (
    <>
      <GlobalStyle />
      <Window>
        <TopBar />
        <Formatting />
        <Workspace>
          <LeftSide />
          <Center />
          <RightEdge />
        </Workspace>
      </Window>
    </>
  );
}
